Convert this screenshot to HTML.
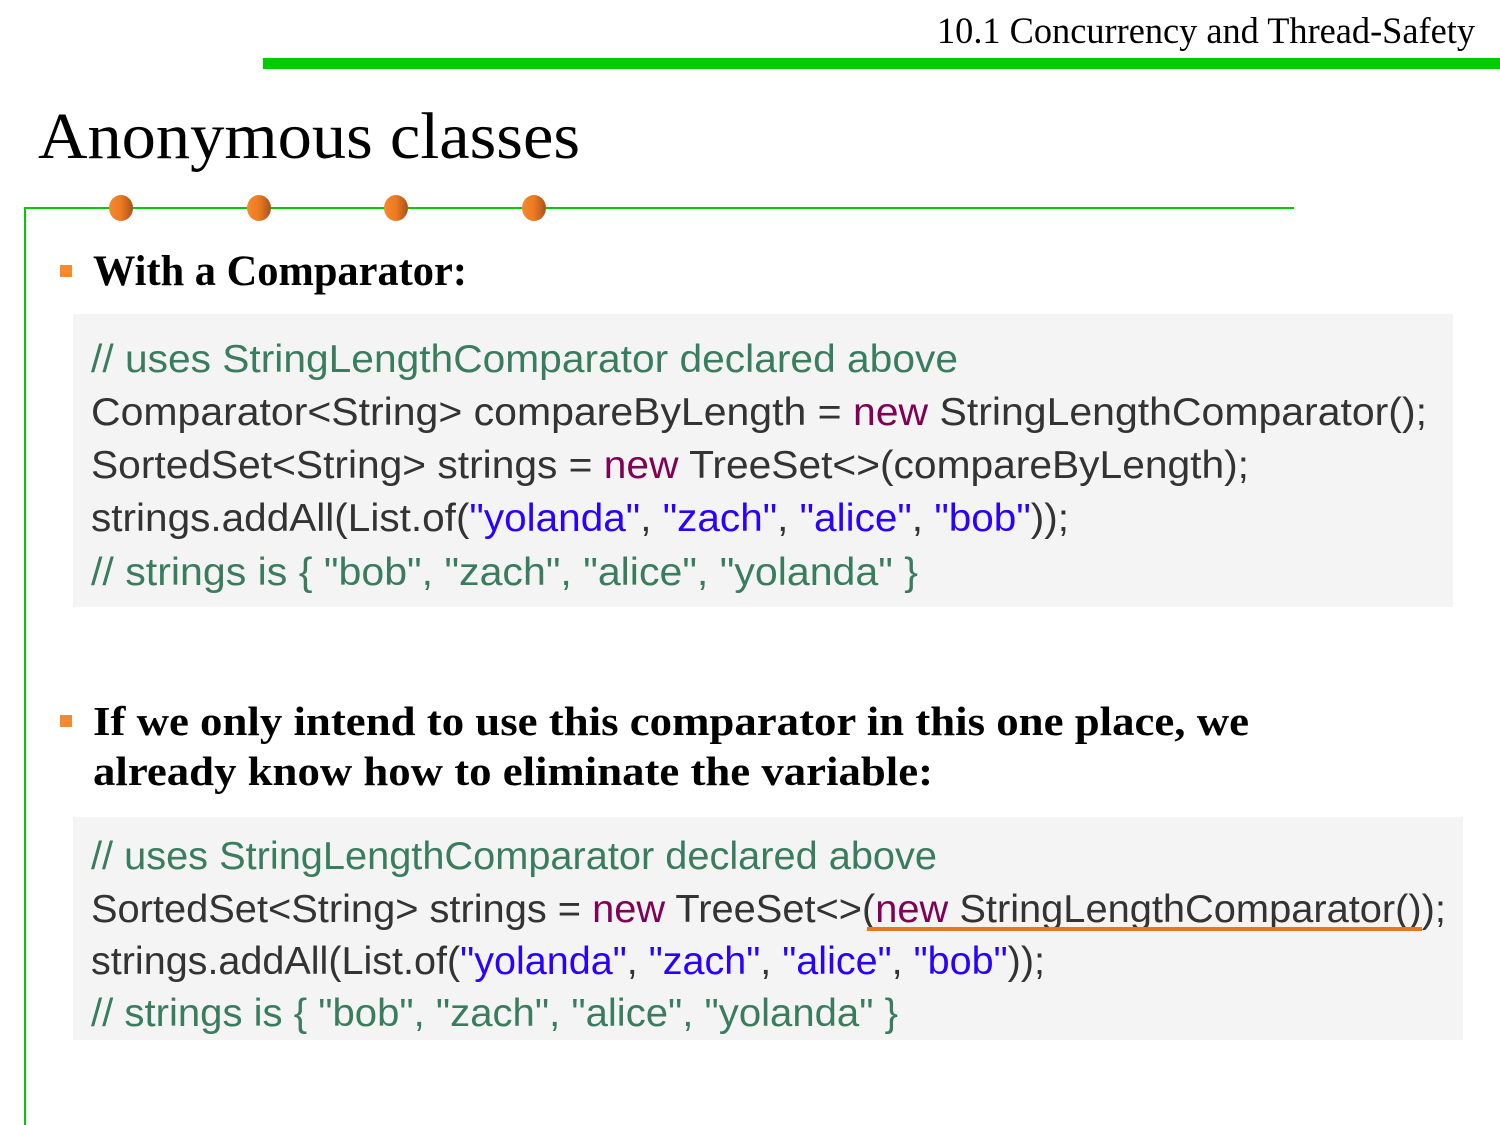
<!DOCTYPE html>
<html><head><meta charset="utf-8"><style>
html,body{margin:0;padding:0;background:#fff;}
svg{display:block;}
.c{font-family:"Liberation Sans","DejaVu Sans",sans-serif;font-size:39px;fill:#333;}
.cm{fill:#3a7d5e}.kw{fill:#7f0055}.st{fill:#2a00ff}
.sf{font-family:"Liberation Serif",serif;}
</style></head><body>
<svg width="1500" height="1125" viewBox="0 0 1500 1125" xmlns="http://www.w3.org/2000/svg">
<defs>
<linearGradient id="g" x1="0" x2="1" y1="0" y2="0"><stop offset="0" stop-color="#f7892e"/><stop offset="0.5" stop-color="#ec7a22"/><stop offset="1" stop-color="#a8521a"/></linearGradient>
</defs>
<text class="sf" x="937" y="43" font-size="37" textLength="538" lengthAdjust="spacingAndGlyphs">10.1 Concurrency and Thread-Safety</text>
<rect x="263" y="58" width="1237" height="11" fill="#00cc00"/>
<text class="sf" x="38" y="158" font-size="66" textLength="542" lengthAdjust="spacingAndGlyphs">Anonymous classes</text>
<rect x="24" y="207" width="1270" height="2" fill="#00cc00"/>
<rect x="24" y="207" width="2" height="918" fill="#00cc00"/>
<ellipse cx="121" cy="208" rx="12" ry="13" fill="url(#g)"/>
<ellipse cx="259" cy="208" rx="12" ry="13" fill="url(#g)"/>
<ellipse cx="396" cy="208" rx="12" ry="13" fill="url(#g)"/>
<ellipse cx="534" cy="208" rx="12" ry="13" fill="url(#g)"/>

<rect x="60" y="265" width="12" height="12" fill="#f7892e"/>
<text class="sf" x="93" y="285" font-size="43" font-weight="bold" textLength="374" lengthAdjust="spacingAndGlyphs">With a Comparator:</text>

<rect x="73" y="314" width="1380" height="293" fill="#f4f4f4"/>
<text class="c cm" x="91" y="372" textLength="867" lengthAdjust="spacingAndGlyphs">// uses StringLengthComparator declared above</text>
<text class="c" x="91" y="425" textLength="1336" lengthAdjust="spacingAndGlyphs">Comparator&lt;String&gt; compareByLength = <tspan class="kw">new</tspan> StringLengthComparator();</text>
<text class="c" x="91" y="478" textLength="1158" lengthAdjust="spacingAndGlyphs">SortedSet&lt;String&gt; strings = <tspan class="kw">new</tspan> TreeSet&lt;&gt;(compareByLength);</text>
<text class="c" x="91" y="531" textLength="978" lengthAdjust="spacingAndGlyphs">strings.addAll(List.of(<tspan class="st">"yolanda"</tspan>, <tspan class="st">"zach"</tspan>, <tspan class="st">"alice"</tspan>, <tspan class="st">"bob"</tspan>));</text>
<text class="c cm" x="91" y="585" textLength="827" lengthAdjust="spacingAndGlyphs">// strings is { "bob", "zach", "alice", "yolanda" }</text>

<rect x="60" y="715" width="12" height="12" fill="#f7892e"/>
<text class="sf" x="93" y="735" font-size="41" font-weight="bold" textLength="1156" lengthAdjust="spacingAndGlyphs">If we only intend to use this comparator in this one place, we</text>
<text class="sf" x="93" y="785" font-size="41" font-weight="bold" textLength="840" lengthAdjust="spacingAndGlyphs">already know how to eliminate the variable:</text>

<rect x="73" y="817" width="1390" height="223" fill="#f4f4f4"/>
<text class="c cm" x="91" y="869" textLength="846" lengthAdjust="spacingAndGlyphs">// uses StringLengthComparator declared above</text>
<text class="c" x="91" y="922" textLength="1355" lengthAdjust="spacingAndGlyphs">SortedSet&lt;String&gt; strings = <tspan class="kw">new</tspan> TreeSet&lt;&gt;(<tspan class="kw">new</tspan> StringLengthComparator());</text>
<rect x="867" y="927" width="555" height="4" fill="#e87722"/>
<text class="c" x="91" y="974" textLength="954" lengthAdjust="spacingAndGlyphs">strings.addAll(List.of(<tspan class="st">"yolanda"</tspan>, <tspan class="st">"zach"</tspan>, <tspan class="st">"alice"</tspan>, <tspan class="st">"bob"</tspan>));</text>
<text class="c cm" x="91" y="1026" textLength="807" lengthAdjust="spacingAndGlyphs">// strings is { "bob", "zach", "alice", "yolanda" }</text>
</svg>
</body></html>
